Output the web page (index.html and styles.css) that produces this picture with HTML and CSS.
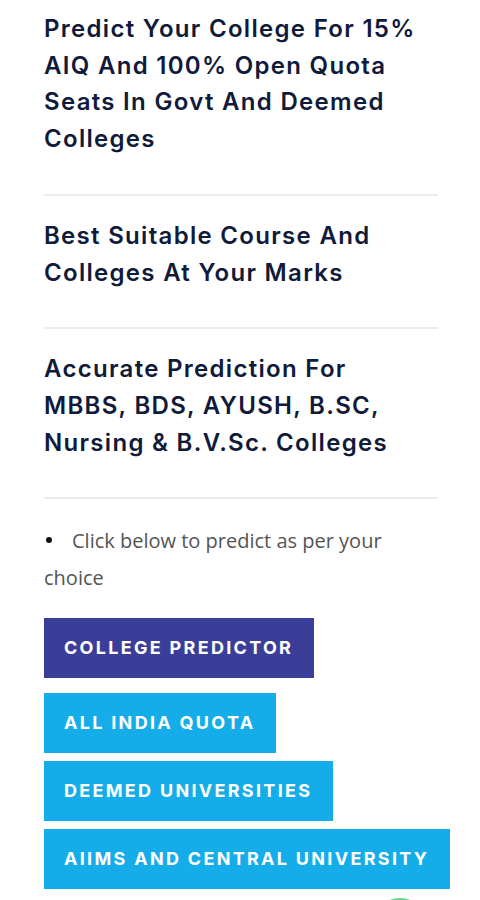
FILE: index.html
```html
<!DOCTYPE html>
<html lang="en">
<head>
<meta charset="utf-8">
<title>College Predictor</title>
<link rel="stylesheet" href="styles.css">
</head>
<body>
<main class="page">
  <section class="feature feature-first">
    <h2 class="feature-title">Predict Your College For 15% AIQ And 100% Open Quota Seats In Govt And Deemed Colleges</h2>
  </section>
  <section class="feature">
    <h2 class="feature-title">Best Suitable Course And Colleges At Your Marks</h2>
  </section>
  <section class="feature">
    <h2 class="feature-title">Accurate Prediction For MBBS, BDS, AYUSH, B.SC, Nursing &amp; B.V.Sc. Colleges</h2>
  </section>
  <ul class="note-list">
    <li class="note">Click below to predict as per your choice</li>
  </ul>
  <div class="primary-wrap">
    <a class="btn btn-primary" href="#">College Predictor</a>
  </div>
  <div class="btn-stack">
    <a class="btn btn-cyan" href="#">All India Quota</a>
    <a class="btn btn-cyan" href="#">Deemed Universities</a>
    <a class="btn btn-cyan" href="#">AIIMS And Central University</a>
  </div>
</main>
<div class="chat-peek">
  <a class="chat-float" href="#" aria-label="Chat"></a>
</div>
</body>
</html>
```
FILE: styles.css
```css
html, body {
  margin: 0;
  padding: 0;
  background: #ffffff;
}

body {
  width: 480px;
  height: 900px;
  overflow: hidden;
  position: relative;
}

.page {
  padding: 0 42px 0 44px;
}

.feature {
  padding: 22px 0 36px;
  border-bottom: 2px solid #ececec;
}

.feature-first {
  padding-top: 11px;
}

.feature-title {
  max-width: 384px;
  margin: 0;
  font-family: "Inter", "Noto Sans", sans-serif;
  font-weight: 600;
  font-size: 24px;
  line-height: 36.7px;
  letter-spacing: 1.3px;
  color: #101a3a;
}

.note-list {
  list-style: none;
  margin: 0;
  padding: 23px 0 0;
}

.note {
  font-family: "Open Sans", "Noto Sans", sans-serif;
  font-size: 20px;
  line-height: 37px;
  color: #545454;
}

.note::before {
  content: "";
  display: inline-block;
  width: 6px;
  height: 6px;
  margin: 0 20px 6px 2px;
  border-radius: 50%;
  background: #111111;
  vertical-align: middle;
}

.primary-wrap {
  padding-top: 22px;
  padding-bottom: 15px;
}

.btn-stack {
  display: flex;
  flex-direction: column;
  align-items: flex-start;
  gap: 8px;
}

.btn {
  display: block;
  width: max-content;
  white-space: nowrap;
  padding: 18px 21px 18px 20px;
  font-family: "Inter", "Noto Sans", sans-serif;
  font-weight: 700;
  font-size: 18px;
  line-height: 24px;
  letter-spacing: 2.3px;
  text-transform: uppercase;
  color: #ffffff;
  text-decoration: none;
}

.btn-primary {
  background: #3b3e98;
}

.btn-cyan {
  background: #14adea;
}

.chat-peek {
  position: absolute;
  left: 372px;
  top: 898px;
  width: 56px;
  height: 2px;
  overflow: hidden;
}

.chat-float {
  display: block;
  width: 56px;
  height: 56px;
  border-radius: 50%;
  background: #5fd586;
}
```
